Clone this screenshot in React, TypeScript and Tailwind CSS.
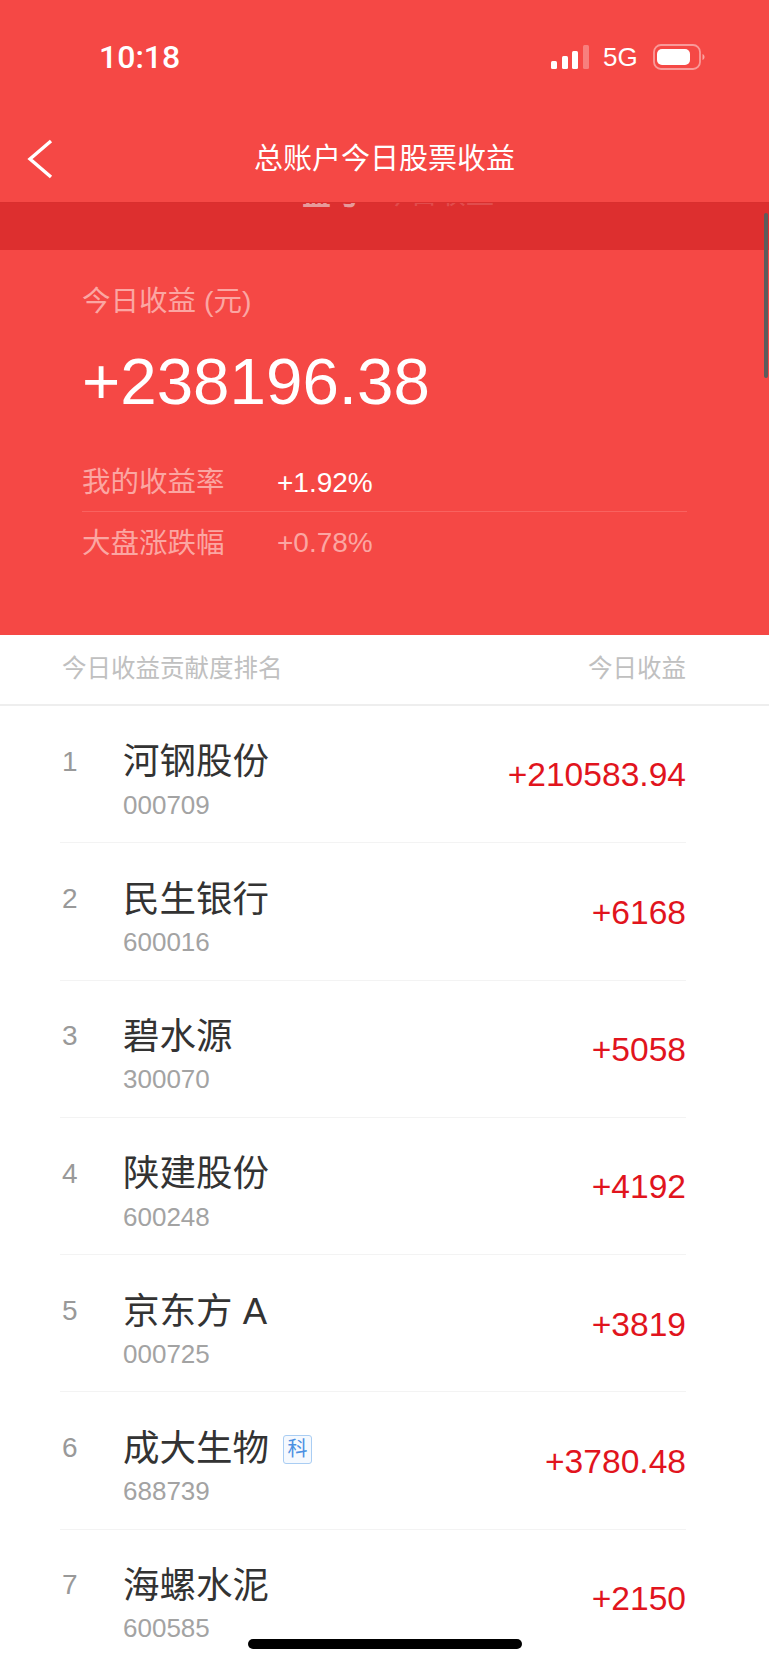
const cjk = "font-['Liberation_Sans','Noto_Sans_CJK_SC',sans-serif]";

const rows = [
  { rank: 1, name: '河钢股份', code: '000709', amount: '+210583.94' },
  { rank: 2, name: '民生银行', code: '600016', amount: '+6168' },
  { rank: 3, name: '碧水源', code: '300070', amount: '+5058' },
  { rank: 4, name: '陕建股份', code: '600248', amount: '+4192' },
  { rank: 5, name: '京东方 A', code: '000725', amount: '+3819' },
  { rank: 6, name: '成大生物', code: '688739', amount: '+3780.48', star: true },
  { rank: 7, name: '海螺水泥', code: '600585', amount: '+2150' },
];

function StatusIcons() {
  return (
    <div className="flex items-center">
      <svg width="40" height="26" viewBox="0 0 40 26" className="text-white">
        <rect x="1" y="17" width="6" height="8" rx="1.5" fill="currentColor" />
        <rect x="12" y="12" width="6" height="13" rx="1.5" fill="currentColor" />
        <rect x="22" y="7" width="6" height="18" rx="1.5" fill="currentColor" />
        <rect x="33" y="1" width="6" height="24" rx="1.5" fill="currentColor" opacity="0.3" />
      </svg>
      <span className="ml-[13px] w-[36px] text-[26px] leading-none text-white">5G</span>
      <svg width="52" height="26" viewBox="0 0 52 26" className="ml-[14px] text-white">
        <rect x="1" y="1" width="46" height="24" rx="7" fill="none" stroke="currentColor" strokeWidth="1.8" opacity="0.45" />
        <rect x="4" y="5" width="33" height="16" rx="5" fill="currentColor" />
        <path d="M49.5 10c1.4.5 2 1.6 2 3s-.6 2.5-2 3z" fill="currentColor" opacity="0.5" />
      </svg>
    </div>
  );
}

function Row({ rank, name, code, amount, star }: { rank: number; name: string; code: string; amount: string; star?: boolean }) {
  return (
    <div className="flex h-[137.3px] shrink-0 items-center border-b border-[#f3f3f3]">
      <div className="w-[63px] shrink-0 pb-[25px] pl-[2px] text-[28px] leading-none text-[#999]">{rank}</div>
      <div className="flex-1 pt-[12px]">
        <div className="flex h-[44px] items-center">
          <span className="text-[36.5px] leading-none text-[#333]">{name}</span>
          {star && (
            <span className="ml-[14px] flex h-[29px] w-[29px] items-center justify-center rounded-[3px] border border-[#a9cdf3] bg-[#f5f9fe] text-[20px] leading-none text-[#4a90e2]">
              科
            </span>
          )}
        </div>
        <div className="mt-[5px] text-[26px] leading-[30px] text-[#a3a3a3]">{code}</div>
      </div>
      <div className="pt-[2px] text-[33.6px] leading-none text-[#e1141d]">{amount}</div>
    </div>
  );
}

export default function App() {
  return (
    <div className={`relative h-[1665px] w-[769px] overflow-hidden bg-white ${cjk}`}>
      <header className="flex h-[202px] flex-col bg-[#f54845]">
        <div className="flex h-[114px] items-center justify-between pl-[99px] pr-[64px]">
          <span className="font-['Roboto',sans-serif] text-[32px] font-medium leading-none text-white">10:18</span>
          <StatusIcons />
        </div>
        <div className="relative flex h-[88px] items-center justify-center pt-[2px]">
          <svg width="26" height="40" viewBox="0 0 26 40" className="absolute left-[27px] top-[25px] text-white">
            <path d="M24 2 L3 20 L24 38" fill="none" stroke="currentColor" strokeWidth="3.4" />
          </svg>
          <span className="text-[29px] leading-none text-white">总账户今日股票收益</span>
        </div>
      </header>

      <div className="h-[48px] overflow-hidden border-t border-[#d92f2e] bg-[#dd2f2f]">
        <div className="-mt-[25px] flex items-center pl-[302px] text-[#e79a9a]">
          <span className="text-[29px] font-bold leading-[34px]">盈亏</span>
          <span className="ml-[22px] text-[28px] leading-[34px] text-[#e14d4d]">今日收益</span>
        </div>
      </div>

      <section className="h-[385px] bg-[#f54845] pl-[82px] pr-[82px]">
        <div className="pt-[35px] text-[28.5px] leading-[32px] text-[#fba6a2]">今日收益 (元)</div>
        <div className="mt-[29px] text-[65.5px] leading-[72px] text-white">+238196.38</div>
        <div className="mt-[34px] flex h-[60px] items-center border-b border-[#f9625f] pt-[2px] text-[28px]">
          <span className="w-[195px] text-[28.5px] text-[#fba6a2]">我的收益率</span>
          <span className="text-white">+1.92%</span>
        </div>
        <div className="flex h-[62px] items-center text-[28px] text-[#fba6a2]">
          <span className="w-[195px] text-[28.5px]">大盘涨跌幅</span>
          <span>+0.78%</span>
        </div>
      </section>

      <div className="flex h-[71px] items-center justify-between border-b-2 border-[#eeeeee] pl-[62px] pr-[83px] text-[24.5px] text-[#c0c0c0]">
        <span>今日收益贡献度排名</span>
        <span>今日收益</span>
      </div>

      <div className="flex flex-col pl-[60px] pr-[83px]">
        {rows.map((row) => (
          <Row key={row.rank} {...row} />
        ))}
      </div>

      <div className="absolute right-[1px] top-[213px] h-[165px] w-[4px] rounded-full bg-[#5c5c5c]" />
      <div className="absolute bottom-[16px] left-[248px] h-[10px] w-[274px] rounded-full bg-black" />
    </div>
  );
}
